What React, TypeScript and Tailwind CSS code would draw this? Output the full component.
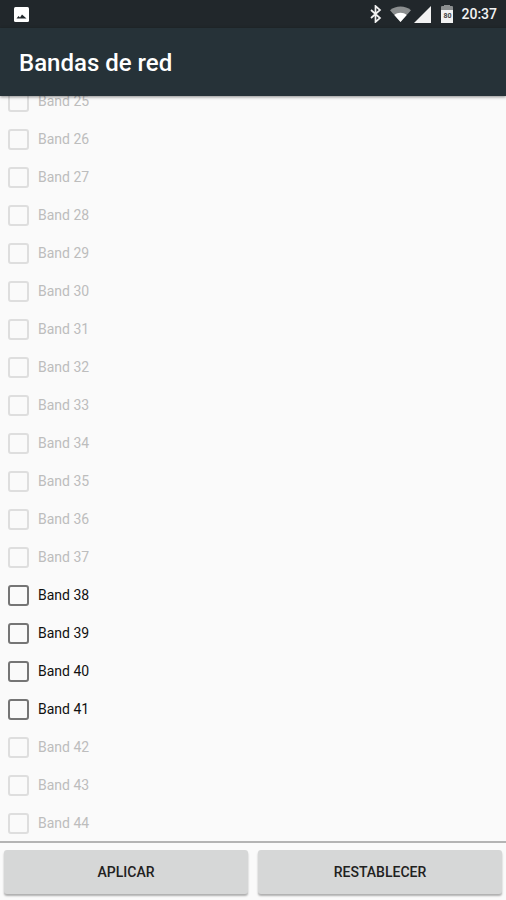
const bands = Array.from({ length: 20 }, (_, i) => i + 25);

function isEnabled(band: number) {
  return band >= 38 && band <= 41;
}

function BandRow({ band }: { band: number }) {
  const enabled = isEnabled(band);
  return (
    <div className="flex h-[38px] items-center pl-[8px]">
      <div
        className={
          enabled
            ? "h-[21px] w-[21px] rounded-[3px] border-2 border-[#757575]"
            : "h-[21px] w-[21px] rounded-[3px] border-2 border-[#dedede]"
        }
      />
      <span className={enabled ? "ml-[9px] text-[14px] text-[#111111]" : "ml-[9px] text-[14px] text-[#bdbdbd]"}>
        Band {band}
      </span>
    </div>
  );
}

function StatusIcons() {
  return (
    <div className="flex items-center text-[#f2f2f2]">
      <svg width="12" height="18" viewBox="0 0 12 18" fill="none" stroke="currentColor" strokeWidth="1.7">
        <path d="M1 5l9 8-4.500 4V1L10 5l-9 8" />
      </svg>
      <svg width="21" height="16" viewBox="0 0 21 16" className="ml-[8px]">
        <path d="M0 4.200C3 1.600 6.600 0.400 10.500 0.400s7.500 1.200 10.500 3.800L10.500 16z" fill="#8b8e8f" />
        <path d="M4.300 8.900C6 7.500 8.100 6.700 10.500 6.700s4.500 .8 6.200 2.200L10.500 16z" fill="#ffffff" />
      </svg>
      <svg width="17" height="17" viewBox="0 0 17 17" className="ml-[3px]">
        <path d="M17 0v17H0z" fill="#f2f2f2" />
      </svg>
      <div className="relative ml-[10px] h-[18px] w-[12px]">
        <div className="absolute left-[3px] top-0 h-[2px] w-[6px] bg-[#8b8e8f]" />
        <div className="absolute left-0 top-[1px] h-[4px] w-[12px] rounded-t-[1px] bg-[#8b8e8f]" />
        <div className="absolute bottom-0 left-0 flex h-[13px] w-[12px] items-center justify-center bg-[#f2f2f2] text-[7px] font-bold leading-none text-[#444444]">
          80
        </div>
      </div>
      <span className="ml-[8px] text-[14px] font-medium leading-none">20:37</span>
    </div>
  );
}

export default function App() {
  return (
    <div className="flex h-[900px] w-[506px] flex-col overflow-hidden bg-[#fafafa] font-['Roboto',sans-serif]">
      <div className="flex h-[28px] shrink-0 items-center justify-between bg-[#21272b] pl-[14px] pr-[9px]">
        <svg width="15" height="15" viewBox="0 0 15 15">
          <rect width="15" height="15" rx="1.500" fill="#ffffff" />
          <path d="M2.500 11.500l2-2.500 1.500 1.500 2-3 4.500 4z" fill="#21272b" />
        </svg>
        <StatusIcons />
      </div>
      <div className="z-10 flex h-[68px] shrink-0 items-center bg-[#263238] pl-[19px] pt-[2px] shadow-[0_1px_3px_rgba(0,0,0,0.45)]">
        <h1 className="text-[24px] font-medium text-white">Bandas de red</h1>
      </div>
      <div className="min-h-0 flex-1 overflow-hidden">
        <div className="-mt-[14px]">
          {bands.map((band) => (
            <BandRow key={band} band={band} />
          ))}
        </div>
      </div>
      <div className="flex h-[59px] shrink-0 gap-[10px] border-t-2 border-[#b4b4b4] px-[4px] pt-[7px]">
        <button className="h-[44px] flex-1 rounded-[3px] bg-[#d6d7d7] text-[14px] font-medium text-[#212121] shadow-[0_2px_2px_rgba(0,0,0,0.3)]">
          APLICAR
        </button>
        <button className="h-[44px] flex-1 rounded-[3px] bg-[#d6d7d7] text-[14px] font-medium text-[#212121] shadow-[0_2px_2px_rgba(0,0,0,0.3)]">
          RESTABLECER
        </button>
      </div>
    </div>
  );
}
